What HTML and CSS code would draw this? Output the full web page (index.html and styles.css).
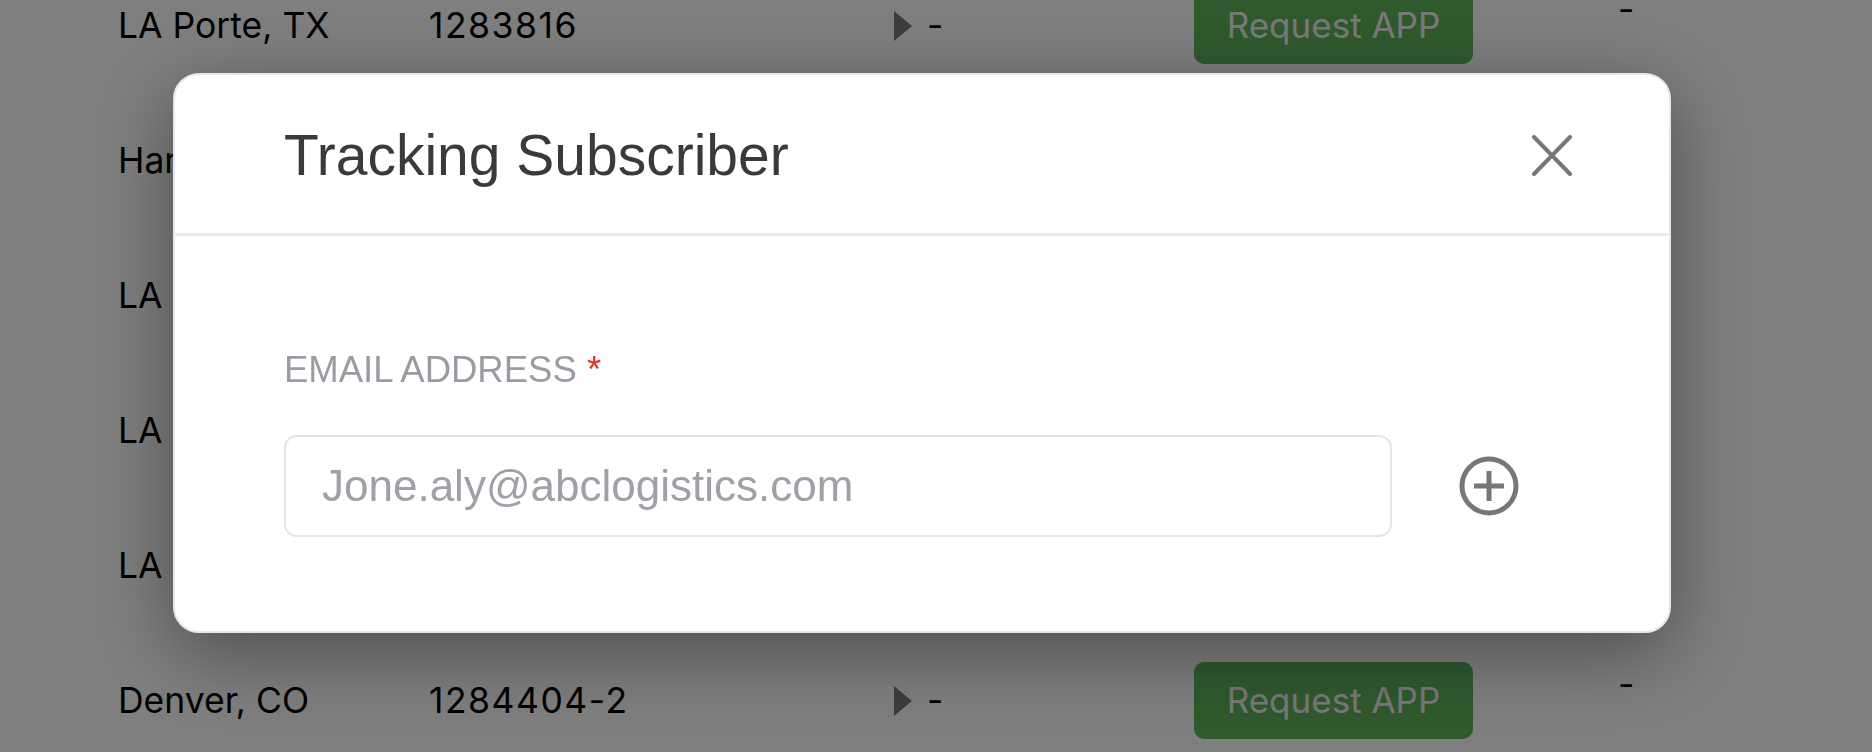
FILE: index.html
```html
<!DOCTYPE html>
<html lang="en">
<head>
    <meta charset="UTF-8">
    <meta name="viewport" content="width=device-width, initial-scale=1.0">
    <title>Tracking Subscriber</title>
    <link rel="stylesheet" href="styles.css">
</head>
<body>
    <div class="shipments">
        <div class="row">
            <span>LA Porte, TX</span>
            <span class="ref">1283816</span>
            <span class="status"><i class="caret"></i>-</span>
            <span><button class="request">Request APP</button></span>
            <span class="note">-</span>
        </div>
        <div class="row">
            <span>Harvey, LA</span>
            <span class="ref">1283902</span>
            <span class="status"><i class="caret"></i>-</span>
            <span><button class="request">Request APP</button></span>
            <span class="note">-</span>
        </div>
        <div class="row">
            <span>LA Porte, TX</span>
            <span class="ref">1283944</span>
            <span class="status"><i class="caret"></i>-</span>
            <span><button class="request">Request APP</button></span>
            <span class="note">-</span>
        </div>
        <div class="row">
            <span>LA Porte, TX</span>
            <span class="ref">1284011</span>
            <span class="status"><i class="caret"></i>-</span>
            <span><button class="request">Request APP</button></span>
            <span class="note">-</span>
        </div>
        <div class="row">
            <span>LA Porte, TX</span>
            <span class="ref">1284187</span>
            <span class="status"><i class="caret"></i>-</span>
            <span><button class="request">Request APP</button></span>
            <span class="note">-</span>
        </div>
        <div class="row">
            <span>Denver, CO</span>
            <span class="ref">1284404-2</span>
            <span class="status"><i class="caret"></i>-</span>
            <span><button class="request">Request APP</button></span>
            <span class="note">-</span>
        </div>
    </div>

    <div class="overlay">
        <div class="modal">
            <div class="modal-header">
                <h2>Tracking Subscriber</h2>
                <button class="close" aria-label="Close">
                    <svg width="40" height="41" viewBox="0 0 40 41">
                        <path d="M2 2 L38 39 M38 2 L2 39" stroke="#767676" stroke-width="4" stroke-linecap="round" fill="none"/>
                    </svg>
                </button>
            </div>
            <form class="modal-body">
                <label for="email">EMAIL ADDRESS <span class="required">*</span></label>
                <div class="email-row">
                    <input type="email" id="email" placeholder="Jone.aly@abclogistics.com">
                    <button type="button" class="add" aria-label="Add email">
                        <svg width="60" height="60" viewBox="0 0 60 60">
                            <circle cx="30" cy="30" r="27" stroke="#777" stroke-width="5" fill="none"/>
                            <path d="M15 30 H45 M30 15 V45" stroke="#777" stroke-width="5" fill="none"/>
                        </svg>
                    </button>
                </div>
            </form>
        </div>
    </div>
</body>
</html>
```

FILE: styles.css
```css
body {
    margin: 0;
    font-family: "Liberation Sans", Arial, sans-serif;
    background-color: #fff;
    color: #000;
    overflow: hidden;
    height: 100vh;
}
.shipments {
    margin-top: -42px;
    padding-left: 118px;
    font-family: Inter, "Liberation Sans", sans-serif;
}
.row {
    display: grid;
    grid-template-columns: 311px 465px 300px 424px auto;
    align-items: center;
    height: 135px;
    font-size: 35.5px;
}
.ref {
    letter-spacing: 1.5px;
}
.status {
    display: flex;
    align-items: center;
    gap: 15px;
}
.caret {
    width: 0;
    height: 0;
    border-top: 15.5px solid transparent;
    border-bottom: 15.5px solid transparent;
    border-left: 18px solid #7a7a7a;
}
.request {
    font-family: inherit;
    font-size: 35px;
    line-height: 42px;
    padding: 17px 0 18px;
    width: 279px;
    background-color: #5fb55c;
    color: #f2f2f2;
    border: none;
    border-radius: 10px;
}
.note {
    align-self: start;
    padding-top: 30px;
}
.overlay {
    position: fixed;
    inset: 0;
    background-color: rgba(0, 0, 0, 0.5);
    display: flex;
    justify-content: center;
    align-items: flex-start;
    padding: 73px 28px 0 0;
}
.modal {
    width: 1498px;
    box-sizing: border-box;
    background-color: #fff;
    border: 2px solid #e6e7ee;
    border-radius: 26px;
    box-shadow: 0 20px 80px rgba(0, 0, 0, 0.4);
}
.modal-header {
    display: flex;
    align-items: center;
    justify-content: space-between;
    padding: 47px 97px 44px 109px;
    border-bottom: 3px solid #ebebf0;
}
.modal-header h2 {
    margin: 0;
    font-size: 57px;
    line-height: 67px;
    font-weight: normal;
    color: #3a3a3c;
}
.close, .add {
    background: none;
    border: none;
    padding: 0;
    display: flex;
    cursor: pointer;
}
.modal-body {
    padding: 112px 0 94px 109px;
}
label {
    display: block;
    font-size: 36.5px;
    line-height: 44px;
    color: #9b9ba3;
}
.required {
    color: #e8321f;
}
.email-row {
    display: flex;
    align-items: center;
    gap: 67px;
    margin-top: 43px;
}
input {
    width: 1108px;
    height: 102px;
    box-sizing: border-box;
    padding: 0 36px;
    border: 2px solid #e2e4ea;
    border-radius: 13px;
    font-family: inherit;
    font-size: 44px;
    color: #333;
    outline: none;
}
input::placeholder {
    color: #a0a0a8;
}
```
